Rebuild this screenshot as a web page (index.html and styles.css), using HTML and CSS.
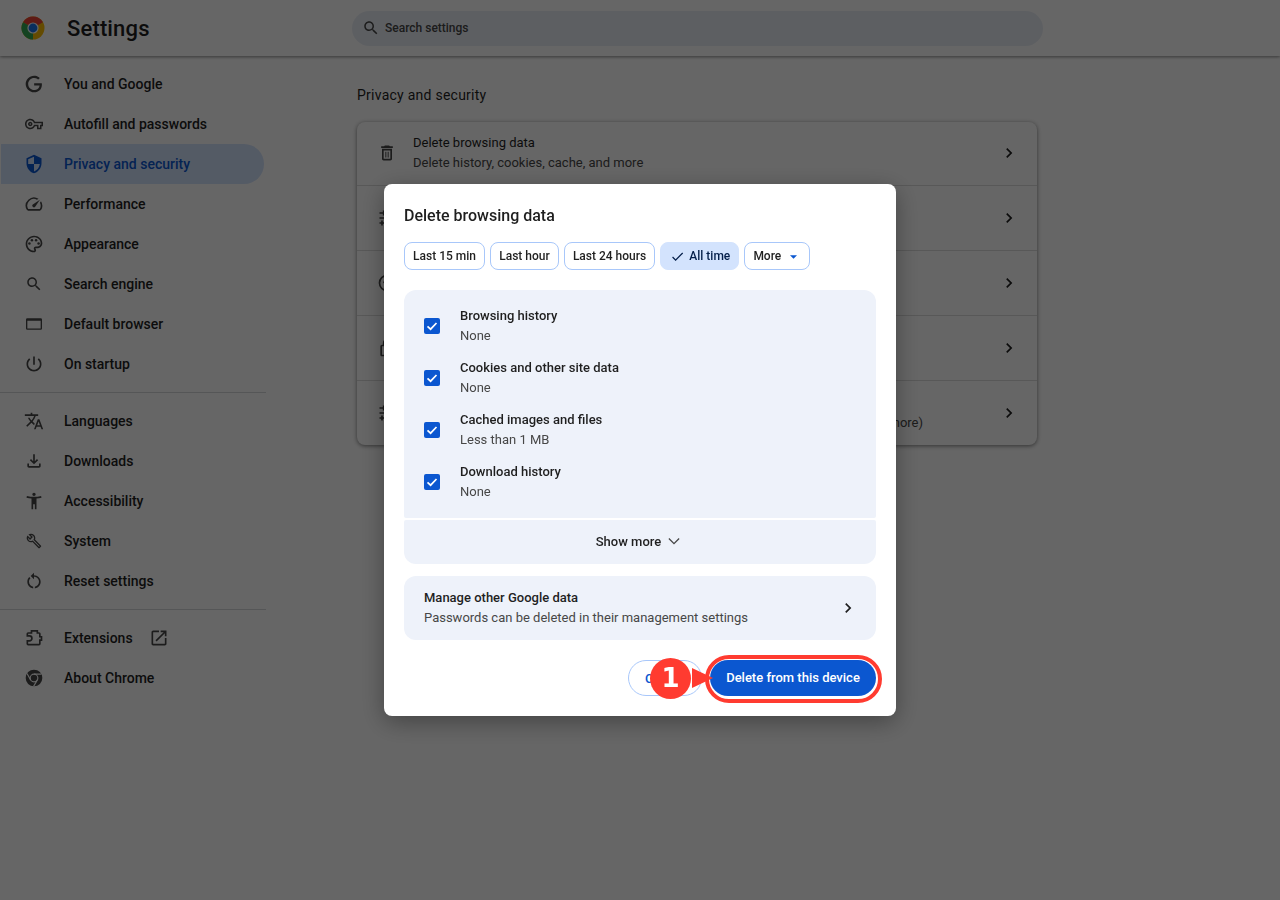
FILE: index.html
```html
<!DOCTYPE html>
<html lang="en">
<head>
<meta charset="utf-8">
<title>Settings</title>
<link rel="stylesheet" href="styles.css">
</head>
<body>
<div class="app">
  <header class="topbar">
    <div class="brand">
      <svg class="logo" viewBox="0 0 24 24"><circle cx="12" cy="12" r="11.5" fill="#fbbc04"/><path d="M12 12 21.96 6.25A11.5 11.5 0 0 0 2.04 6.25Z" fill="#ea4335"/><path d="M12 12 2.04 6.25A11.5 11.5 0 0 0 12 23.5Z" fill="#34a853"/><circle cx="12" cy="12" r="5.6" fill="#fff"/><circle cx="12" cy="12" r="4.4" fill="#1a73e8"/></svg>
      <h1 class="title">Settings</h1>
    </div>
    <div class="search">
      <svg class="search-icon" viewBox="0 0 24 24"><path d="M15.5 14h-.79l-.28-.27C15.41 12.59 16 11.11 16 9.5 16 5.91 13.09 3 9.5 3S3 5.91 3 9.5 5.91 16 9.5 16c1.61 0 3.09-.59 4.23-1.57l.27.28v.79l5 4.99L20.49 19l-4.99-5zm-6 0C7.01 14 5 11.99 5 9.5S7.01 5 9.5 5 14 7.01 14 9.5 11.99 14 9.5 14z"/></svg>
      <span>Search settings</span>
    </div>
  </header>
  <div class="body">
    <nav class="side">
      <a class="nav"><svg class="ico" viewBox="0 0 24 24"><path d="M21.35 11.1h-9.17v2.73h6.51c-.33 3.81-3.5 5.44-6.5 5.44C8.36 19.27 5 16.25 5 12c0-4.1 3.2-7.27 7.2-7.27 3.09 0 4.9 1.97 4.9 1.97L19 4.72S16.56 2 12.1 2C6.42 2 2 6.8 2 12c0 5.05 4.13 10 10.22 10 5.35 0 9.25-3.67 9.25-9.09 0-1.15-.12-1.81-.12-1.81z"/></svg>You and Google</a>
      <a class="nav"><svg class="ico s18" viewBox="0 0 24 24"><path d="M22 19h-6v-4h-2.68c-1.14 2.42-3.6 4-6.32 4-3.86 0-7-3.14-7-7s3.14-7 7-7c2.72 0 5.17 1.58 6.32 4H24v6h-2v4zm-4-2h2v-4h2v-2H11.94l-.23-.67C11.01 8.34 9.11 7 7 7c-2.76 0-5 2.24-5 5s2.24 5 5 5c2.11 0 4.01-1.34 4.71-3.33l.23-.67H18v4zM7 15c-1.65 0-3-1.35-3-3s1.35-3 3-3 3 1.35 3 3-1.35 3-3 3zm0-4c-.55 0-1 .45-1 1s.45 1 1 1 1-.45 1-1-.45-1-1-1z"/></svg>Autofill and passwords</a>
      <a class="nav active"><svg class="ico" viewBox="0 0 24 24"><path d="M12 1L3 5v6c0 5.55 3.84 10.74 9 12 5.16-1.26 9-6.45 9-12V5l-9-4zm0 10.99h7c-.53 4.12-3.28 7.79-7 8.94V12H5V6.3l7-3.11v8.8z"/></svg>Privacy and security</a>
      <a class="nav"><svg class="ico" viewBox="0 0 24 24"><path d="M20.38 8.57l-1.23 1.85a8 8 0 0 1-.22 7.58H5.07A8 8 0 0 1 15.58 6.85l1.85-1.23A10 10 0 0 0 3.35 19a2 2 0 0 0 1.72 1h13.85a2 2 0 0 0 1.74-1 10 10 0 0 0-.27-10.44zm-9.79 6.84a2 2 0 0 0 2.83 0l5.66-8.49-8.49 5.66a2 2 0 0 0 0 2.83z"/></svg>Performance</a>
      <a class="nav"><svg class="ico" viewBox="0 0 24 24"><path d="M12 22C6.49 22 2 17.51 2 12S6.49 2 12 2s10 4.04 10 9c0 3.31-2.69 6-6 6h-1.77c-.28 0-.5.22-.5.5 0 .12.05.23.13.33.41.47.64 1.06.64 1.67 0 1.38-1.12 2.5-2.5 2.5zm0-18c-4.41 0-8 3.59-8 8s3.59 8 8 8c.28 0 .5-.22.5-.5 0-.16-.08-.28-.14-.35-.41-.46-.63-1.05-.63-1.65 0-1.38 1.12-2.5 2.5-2.5H16c2.21 0 4-1.79 4-4 0-3.86-3.59-7-8-7z"/><circle cx="6.5" cy="11.5" r="1.5"/><circle cx="9.5" cy="7.5" r="1.5"/><circle cx="14.5" cy="7.5" r="1.5"/><circle cx="17.5" cy="11.5" r="1.5"/></svg>Appearance</a>
      <a class="nav"><svg class="ico s18" viewBox="0 0 24 24"><path d="M15.5 14h-.79l-.28-.27C15.41 12.59 16 11.11 16 9.5 16 5.91 13.09 3 9.5 3S3 5.91 3 9.5 5.91 16 9.5 16c1.61 0 3.09-.59 4.23-1.57l.27.28v.79l5 4.99L20.49 19l-4.99-5zm-6 0C7.01 14 5 11.99 5 9.5S7.01 5 9.5 5 14 7.01 14 9.5 11.99 14 9.5 14z"/></svg>Search engine</a>
      <a class="nav"><svg class="ico" viewBox="0 0 24 24"><path fill-rule="evenodd" d="M4 5h16a1.6 1.6 0 0 1 1.6 1.6v10.8A1.6 1.6 0 0 1 20 19H4a1.6 1.6 0 0 1-1.6-1.6V6.6A1.6 1.6 0 0 1 4 5zm0 3v9.4h16V8z"/></svg>Default browser</a>
      <a class="nav"><svg class="ico" viewBox="0 0 24 24"><path d="M13 3h-2v10h2V3zm4.83 2.17l-1.42 1.42C17.99 7.86 19 9.81 19 12c0 3.87-3.13 7-7 7s-7-3.13-7-7c0-2.19 1.01-4.14 2.58-5.42L6.17 5.17C4.23 6.82 3 9.26 3 12c0 4.97 4.03 9 9 9s9-4.03 9-9c0-2.74-1.23-5.18-3.17-6.83z"/></svg>On startup</a>
      <hr class="rule">
      <a class="nav"><svg class="ico" viewBox="0 0 24 24"><path d="M12.87 15.07l-2.54-2.51.03-.03c1.74-1.94 2.98-4.17 3.71-6.53H17V4h-7V2H8v2H1v1.99h11.17C11.5 7.92 10.44 9.75 9 11.35 8.07 10.32 7.3 9.19 6.69 8h-2c.73 1.63 1.73 3.17 2.98 4.56l-5.09 5.02L4 19l5-5 3.11 3.11.76-2.04zM18.5 10h-2L12 22h2l1.12-3h4.75L21 22h2l-4.5-12zm-2.62 7l1.62-4.33L19.12 17h-3.24z"/></svg>Languages</a>
      <a class="nav"><svg class="ico" viewBox="0 0 24 24"><path d="M18 15v3H6v-3H4v3c0 1.1.9 2 2 2h12c1.1 0 2-.9 2-2v-3h-2zm-1-4l-1.41-1.41L13 12.17V4h-2v8.17L8.41 9.59 7 11l5 5 5-5z"/></svg>Downloads</a>
      <a class="nav"><svg class="ico" viewBox="0 0 24 24"><path d="M20.5 6c-2.61.7-5.67 1-8.5 1s-5.89-.3-8.5-1L3 8c1.86.5 4 .83 6 1v13h2v-6h2v6h2V9c2-.17 4.14-.5 6-1l-.5-2zM12 6c1.1 0 2-.9 2-2s-.9-2-2-2-2 .9-2 2 .9 2 2 2z"/></svg>Accessibility</a>
      <a class="nav"><svg class="ico s15" viewBox="0 0 24 24"><path d="M22.61 18.99l-9.08-9.08c.93-2.34.45-5.1-1.44-7C9.79.61 6.21.4 3.66 2.26L7.5 6.11 6.08 7.52 2.25 3.69C.39 6.23.6 9.82 2.9 12.11c1.86 1.86 4.57 2.35 6.89 1.48l9.11 9.11c.39.39 1.02.39 1.41 0l2.3-2.3c.4-.38.4-1.01 0-1.41zm-3 1.6l-9.46-9.46c-.61.45-1.29.72-2 .82-1.36.2-2.79-.21-3.83-1.25C3.38 9.76 2.94 8.5 3 7.26l3.09 3.09 4.24-4.24-3.09-3.09c1.24-.06 2.49.38 3.44 1.32 1.08 1.08 1.49 2.57 1.24 3.96-.12.71-.42 1.37-.88 1.96l9.45 9.45-.88.88z"/></svg>System</a>
      <a class="nav"><svg class="ico" viewBox="0 0 24 24"><path d="M12 5V2L8 6l4 4V7c3.31 0 6 2.69 6 6 0 2.97-2.17 5.43-5 5.91v2.02c3.95-.49 7-3.85 7-7.93 0-4.42-3.58-8-8-8zm-6 8c0-1.65.67-3.15 1.76-4.24L6.34 7.34C4.9 8.79 4 10.79 4 13c0 4.08 3.05 7.44 7 7.93v-2.02c-2.83-.48-5-2.94-5-5.91z"/></svg>Reset settings</a>
      <hr class="rule">
      <a class="nav"><svg class="ico" viewBox="0 0 24 24"><path class="outline" d="M5 6h4V3.5h7V6h2a1 1 0 0 1 1 1v3.5h2v4h-2V19a1 1 0 0 1-1 1H5a1 1 0 0 1-1-1v-3.5h2.5a3 3 0 0 0 0-6H4V7a1 1 0 0 1 1-1z"/></svg>Extensions<svg class="ico ext" viewBox="0 0 24 24"><path d="M19 19H5V5h7V3H5c-1.11 0-2 .9-2 2v14c0 1.1.89 2 2 2h14c1.1 0 2-.9 2-2v-7h-2v7zM14 3v2h3.59l-9.83 9.83 1.41 1.41L19 6.41V10h2V3h-7z"/></svg></a>
      <a class="nav"><svg class="ico" viewBox="0 0 24 24"><circle cx="12" cy="12" r="10"/><circle class="cut" cx="12" cy="12" r="4.6"/><path class="cut" d="M12 7.4H21M8 14.3 3.6 6.6M16 14.3 11.5 22"/></svg>About Chrome</a>
    </nav>
    <main class="main">
      <h2 class="section">Privacy and security</h2>
      <section class="card">
        <div class="row">
          <svg class="ico row-ico" viewBox="0 0 24 24"><path d="M6 19c0 1.1.9 2 2 2h8c1.1 0 2-.9 2-2V7H6v12zM8 9h8v10H8V9zm7.5-5l-1-1h-5l-1 1H5v2h14V4h-3.5zM10 10.5h1.2v7H10zM12.8 10.5H14v7h-1.2z"/></svg>
          <div class="row-text"><div class="row-title">Delete browsing data</div><div class="row-sub">Delete history, cookies, cache, and more</div></div>
          <svg class="chev" viewBox="0 0 24 24"><path d="M10 6L8.59 7.41 13.17 12l-4.58 4.59L10 18l6-6z"/></svg>
        </div>
        <div class="row">
          <svg class="ico row-ico" viewBox="0 0 24 24"><path d="M7 3h2v6H7V7H3V5h4zM3 11h6v2H3zM5 15h2v2h2v2H7v2H5v-2H3v-2h2z"/></svg>
          <div class="row-text"></div>
          <svg class="chev" viewBox="0 0 24 24"><path d="M10 6L8.59 7.41 13.17 12l-4.58 4.59L10 18l6-6z"/></svg>
        </div>
        <div class="row">
          <svg class="ico row-ico" viewBox="0 0 24 24"><path d="M12 2a10 10 0 1 0 0 20 10 10 0 0 0 0-20zm0 18a8 8 0 1 1 0-16 8 8 0 0 1 0 16z"/><circle cx="9" cy="11" r="1.4"/></svg>
          <div class="row-text"></div>
          <svg class="chev" viewBox="0 0 24 24"><path d="M10 6L8.59 7.41 13.17 12l-4.58 4.59L10 18l6-6z"/></svg>
        </div>
        <div class="row">
          <svg class="ico row-ico" viewBox="0 0 24 24"><path d="M18 8h-1V6a5 5 0 0 0-10 0v2H6a2 2 0 0 0-2 2v10c0 1.1.9 2 2 2h12a2 2 0 0 0 2-2V10a2 2 0 0 0-2-2zM9 6a3 3 0 0 1 6 0v2H9V6zm9 14H6V10h12v10z"/></svg>
          <div class="row-text"></div>
          <svg class="chev" viewBox="0 0 24 24"><path d="M10 6L8.59 7.41 13.17 12l-4.58 4.59L10 18l6-6z"/></svg>
        </div>
        <div class="row">
          <svg class="ico row-ico" viewBox="0 0 24 24"><path d="M7 3h2v6H7V7H3V5h4zM3 11h6v2H3zM5 15h2v2h2v2H7v2H5v-2H3v-2h2z"/></svg>
          <div class="row-text"><div class="row-title">Site settings</div><div class="row-sub">Controls what information sites can use and show (location, camera, pop-ups, and more)</div></div>
          <svg class="chev" viewBox="0 0 24 24"><path d="M10 6L8.59 7.41 13.17 12l-4.58 4.59L10 18l6-6z"/></svg>
        </div>
      </section>
    </main>
  </div>
</div>

<div class="scrim">
  <div class="dialog">
    <h3 class="dlg-title">Delete browsing data</h3>
    <div class="chips">
      <button class="chip">Last 15 min</button>
      <button class="chip">Last hour</button>
      <button class="chip">Last 24 hours</button>
      <button class="chip on"><svg class="chip-check" viewBox="0 0 24 24"><path d="M9 16.2 4.8 12l-1.4 1.4L9 19 21 7l-1.4-1.4z"/></svg>All time</button>
      <button class="chip">More<svg class="caret" viewBox="0 0 10 5"><path d="M0 0h10L5 5z"/></svg></button>
    </div>
    <div class="panel">
      <div class="opt"><span class="box"><svg viewBox="0 0 16 16"><path d="M3.5 8.3 6.6 11.2 12.5 5" /></svg></span><div><div class="opt-title">Browsing history</div><div class="opt-sub">None</div></div></div>
      <div class="opt"><span class="box"><svg viewBox="0 0 16 16"><path d="M3.5 8.3 6.6 11.2 12.5 5" /></svg></span><div><div class="opt-title">Cookies and other site data</div><div class="opt-sub">None</div></div></div>
      <div class="opt"><span class="box"><svg viewBox="0 0 16 16"><path d="M3.5 8.3 6.6 11.2 12.5 5" /></svg></span><div><div class="opt-title">Cached images and files</div><div class="opt-sub">Less than 1 MB</div></div></div>
      <div class="opt"><span class="box"><svg viewBox="0 0 16 16"><path d="M3.5 8.3 6.6 11.2 12.5 5" /></svg></span><div><div class="opt-title">Download history</div><div class="opt-sub">None</div></div></div>
    </div>
    <div class="showmore">Show more<svg class="down" viewBox="0 0 24 24"><path d="M17.6 8.4 12 14 6.4 8.4 5.3 9.5 12 16.2l6.7-6.7z"/></svg></div>
    <div class="manage">
      <div><div class="opt-title">Manage other Google data</div><div class="opt-sub">Passwords can be deleted in their management settings</div></div>
      <svg class="chev" viewBox="0 0 24 24"><path d="M10 6L8.59 7.41 13.17 12l-4.58 4.59L10 18l6-6z"/></svg>
    </div>
    <div class="actions">
      <button class="btn cancel">Cancel</button>
      <div class="target">
        <button class="btn primary">Delete from this device</button>
        <span class="ring"></span>
        <span class="arrow"></span>
        <span class="badge">1</span>
      </div>
    </div>
  </div>
</div>
</body>
</html>
```
FILE: styles.css
```css
* { box-sizing: border-box; }
html, body { margin: 0; height: 900px; overflow: hidden; }
body { font-family: Roboto, "Liberation Sans", sans-serif; color: #1f1f1f; background: #fff; position: relative; }

.app { display: flex; flex-direction: column; height: 900px; }
.topbar { height: 56px; flex: none; display: flex; align-items: center; box-shadow: 0 1px 3px rgba(0,0,0,.45); position: relative; }
.brand { width: 352px; flex: none; display: flex; align-items: center; padding-left: 21px; }
.logo { width: 24px; height: 24px; }
.title { margin: 0 0 0 22px; font-size: 22px; font-weight: 500; letter-spacing: .15px; }
.search { width: 691px; height: 35px; border-radius: 18px; background: #e9eef6; display: flex; align-items: center; gap: 5px; padding-left: 10px; font-size: 12px; font-weight: 500; color: #474747; }
.search-icon { width: 18px; height: 18px; fill: #474747; }

.body { display: flex; flex: 1; }
.side { width: 266px; flex: none; padding-top: 8px; }
.nav { display: flex; align-items: center; height: 40px; width: 264px; padding-left: 24px; gap: 20px; font-size: 14px; font-weight: 500; border-radius: 0 20px 20px 0; }
.nav.active { background: #d3e3fd; color: #0b57d0; margin-left: 1px; width: 263px; padding-left: 23px; }
.nav.active .ico { fill: #0b57d0; }
.ico { width: 20px; height: 20px; fill: #474747; flex: none; }
.ico.s18 { width: 18px; height: 18px; margin: 0 1px; }
.ico.s15 { width: 16px; height: 16px; margin: 0 2px; }
.ico.ext { margin-left: -4px; }
.outline { fill: none; stroke: #474747; stroke-width: 2; }
.cut { fill: none; stroke: #fff; stroke-width: 1.4; }
.rule { border: 0; border-top: 1px solid #d5d7da; margin: 8px 0; height: 1px; width: 266px; }

.main { padding: 30px 0 0 91px; }
.section { margin: 0 0 18px; font-size: 14px; font-weight: 400; line-height: 18px; letter-spacing: .25px; }
.card { width: 680px; border-radius: 8px; box-shadow: 0 1px 4px rgba(0,0,0,.5); }
.row { height: 65px; display: flex; align-items: center; padding: 0 18px 0 20px; border-top: 1px solid #dcdcdc; }
.row:first-child { height: 63px; border-top: 0; padding-bottom: 2px; }
.row-ico { margin-right: 16px; }
.row-text { flex: 1; }
.row-title { font-size: 13px; line-height: 20px; }
.row-sub { font-size: 13px; line-height: 20px; color: #474747; }
.chev { width: 20px; height: 20px; fill: #1f1f1f; flex: none; }

.scrim { position: fixed; inset: 0; background: rgba(0,0,0,.6); display: flex; align-items: center; justify-content: center; }
.dialog { width: 512px; height: 532px; background: #fff; border-radius: 8px; box-shadow: 0 6px 24px rgba(0,0,0,.35); padding: 21px 20px 20px; display: flex; flex-direction: column; }
.dlg-title { margin: 0; font-size: 16px; font-weight: 500; line-height: 22px; }
.chips { display: flex; gap: 5px; margin-top: 15px; }
.chip { height: 28px; padding: 0 8.1px; border: 1px solid #a8c7fa; border-radius: 8px; background: #fff; font: 500 12px Roboto, sans-serif; color: #1f1f1f; display: flex; align-items: center; }
.chip.on { background: #d3e3fd; border-color: #d3e3fd; color: #041e49; padding: 0 8px 0 9px; }
.chip-check { width: 15px; height: 15px; fill: #041e49; margin-right: 4px; }
.caret { width: 7px; height: 4px; fill: #0b57d0; margin: 1px 4px 0 9px; }

.panel { margin-top: 20px; height: 228px; background: #eef2fa; border-radius: 12px 12px 2px 2px; padding-top: 10px; }
.opt { height: 52px; display: flex; align-items: center; padding-left: 20px; gap: 20px; }
.box { width: 16px; height: 16px; border-radius: 2px; background: #0b57d0; flex: none; display: flex; }
.box svg { width: 16px; height: 16px; fill: none; stroke: #fff; stroke-width: 1.7; }
.opt-title { font-size: 13px; font-weight: 500; line-height: 20px; color: #1f1f1f; }
.opt-sub { font-size: 13px; line-height: 20px; color: #474747; }
.showmore { margin-top: 2px; height: 44px; padding-bottom: 2px; background: #eef2fa; border-radius: 2px 2px 12px 12px; display: flex; align-items: center; justify-content: center; gap: 3px; font-size: 13px; font-weight: 500; color: #1f1f1f; }
.down { width: 20px; height: 20px; fill: #474747; }
.manage { margin-top: 12px; height: 64px; background: #eef2fa; border-radius: 12px; display: flex; align-items: center; justify-content: space-between; padding: 0 18px 0 20px; }

.actions { margin-top: 20px; display: flex; justify-content: flex-end; gap: 8px; }
.btn { height: 36px; border-radius: 18px; font: 500 13px Roboto, sans-serif; }
.cancel { width: 74px; background: #fff; border: 1px solid #a8c7fa; color: #0b57d0; }
.target { position: relative; display: flex; }
.primary { width: 166px; border: 0; padding: 0 0 2px; background: #0b57d0; color: #fff; }
.ring { position: absolute; left: -5px; top: -5px; right: -6px; bottom: -7px; border: 4px solid #ff3b30; border-radius: 24px; }
.arrow { position: absolute; left: -18px; top: 8px; width: 0; height: 0; border-left: 21px solid #ff3b30; border-top: 10px solid transparent; border-bottom: 10px solid transparent; }
.badge { position: absolute; left: -60px; top: -2px; width: 41px; height: 41px; border-radius: 50%; background: #ff3b30; color: #fff; font: 700 26px/41px "DejaVu Sans", sans-serif; text-align: center; }
```
